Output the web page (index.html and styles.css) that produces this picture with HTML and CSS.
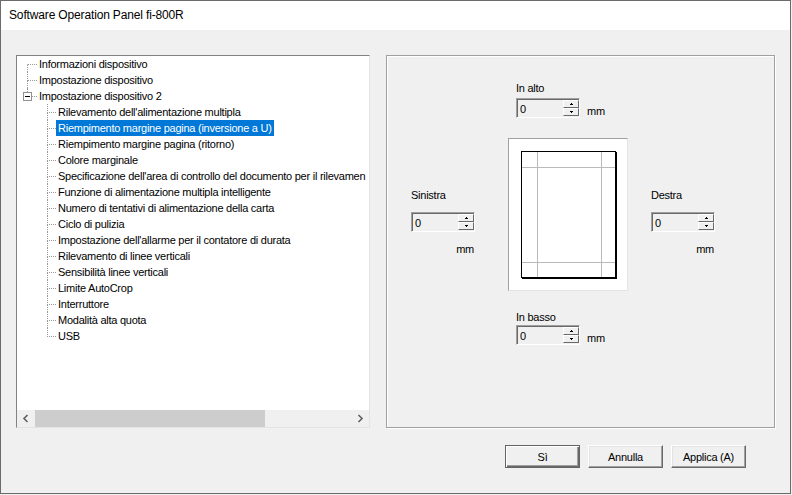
FILE: index.html
```html
<!DOCTYPE html>
<html lang="it">
<head>
<meta charset="utf-8">
<title>Software Operation Panel fi-800R</title>
<link rel="stylesheet" href="styles.css">
</head>
<body>
<div class="window">
  <div class="titlebar">Software Operation Panel fi-800R</div>
  <div class="content">
    <div class="panes">
      <div class="tree">
        <div class="tree-list">
          <div class="row"><div class="twig l0 first"><div class="t"></div><div class="b"></div></div><span class="lbl">Informazioni dispositivo</span></div>
          <div class="row"><div class="twig l0"><div class="t"></div><div class="b"></div></div><span class="lbl">Impostazione dispositivo</span></div>
          <div class="row"><div class="exp"><div class="seg"></div><div class="boxrow"><div class="minus"><div class="bar"></div></div><div class="hline"></div></div></div><span class="lbl">Impostazione dispositivo 2</span></div>
          <div class="row"><div class="twig l1"><div class="t"></div><div class="b"></div></div><span class="lbl">Rilevamento dell'alimentazione multipla</span></div>
          <div class="row"><div class="twig l1"><div class="t"></div><div class="b"></div></div><span class="lbl sel">Riempimento margine pagina (inversione a U)</span></div>
          <div class="row"><div class="twig l1"><div class="t"></div><div class="b"></div></div><span class="lbl">Riempimento margine pagina (ritorno)</span></div>
          <div class="row"><div class="twig l1"><div class="t"></div><div class="b"></div></div><span class="lbl">Colore marginale</span></div>
          <div class="row"><div class="twig l1"><div class="t"></div><div class="b"></div></div><span class="lbl">Specificazione dell'area di controllo del documento per il rilevamen</span></div>
          <div class="row"><div class="twig l1"><div class="t"></div><div class="b"></div></div><span class="lbl">Funzione di alimentazione multipla intelligente</span></div>
          <div class="row"><div class="twig l1"><div class="t"></div><div class="b"></div></div><span class="lbl">Numero di tentativi di alimentazione della carta</span></div>
          <div class="row"><div class="twig l1"><div class="t"></div><div class="b"></div></div><span class="lbl">Ciclo di pulizia</span></div>
          <div class="row"><div class="twig l1"><div class="t"></div><div class="b"></div></div><span class="lbl">Impostazione dell'allarme per il contatore di durata</span></div>
          <div class="row"><div class="twig l1"><div class="t"></div><div class="b"></div></div><span class="lbl">Rilevamento di linee verticali</span></div>
          <div class="row"><div class="twig l1"><div class="t"></div><div class="b"></div></div><span class="lbl">Sensibilità linee verticali</span></div>
          <div class="row"><div class="twig l1"><div class="t"></div><div class="b"></div></div><span class="lbl">Limite AutoCrop</span></div>
          <div class="row"><div class="twig l1"><div class="t"></div><div class="b"></div></div><span class="lbl">Interruttore</span></div>
          <div class="row"><div class="twig l1"><div class="t"></div><div class="b"></div></div><span class="lbl">Modalità alta quota</span></div>
          <div class="row"><div class="twig l1 last"><div class="t"></div><div class="b"></div></div><span class="lbl">USB</span></div>
        </div>
        <div class="hscroll">
          <div class="sb-btn"><svg width="17" height="17" viewBox="0 0 17 17"><path d="M10.5 5 L7 8.5 L10.5 12" fill="none" stroke="#606060" stroke-width="1.6"/></svg></div>
          <div class="sb-track"><div class="sb-thumb"></div></div>
          <div class="sb-btn"><svg width="17" height="17" viewBox="0 0 17 17"><path d="M6.5 5 L10 8.5 L6.5 12" fill="none" stroke="#606060" stroke-width="1.6"/></svg></div>
        </div>
      </div>

      <div class="group">
        <div class="g-top">
          <div class="caption">In alto</div>
          <div class="spinrow top-gap">
            <div class="spin"><div class="field">0</div><div class="spin-btns"><div class="sbtn"><svg width="5" height="3" viewBox="0 0 5 3"><path d="M2 0h1v1h1v1h-3v-1h1z"/></svg></div><div class="sbtn"><svg width="5" height="3" viewBox="0 0 5 3"><path d="M1 0h3v1h-1v1h-1v-1h-1z"/></svg></div></div></div>
            <span class="unit">mm</span>
          </div>
        </div>

        <div class="g-mid">
          <div class="side left">
            <div class="caption">Sinistra</div>
            <div class="spin side-spin"><div class="field">0</div><div class="spin-btns"><div class="sbtn"><svg width="5" height="3" viewBox="0 0 5 3"><path d="M2 0h1v1h1v1h-3v-1h1z"/></svg></div><div class="sbtn"><svg width="5" height="3" viewBox="0 0 5 3"><path d="M1 0h3v1h-1v1h-1v-1h-1z"/></svg></div></div></div>
            <div class="side-unit">mm</div>
          </div>
          <div class="frame">
            <svg class="paper" width="97" height="129" viewBox="0 0 97 129">
              <rect x="0.5" y="0.5" width="94" height="126" fill="#fff" stroke="#000"/>
              <rect x="95" y="1" width="1" height="127" fill="#000"/>
              <rect x="1" y="127" width="95" height="1" fill="#000"/>
              <rect x="16" y="1" width="1" height="125" fill="#b9b9b9"/>
              <rect x="80" y="1" width="1" height="125" fill="#b9b9b9"/>
              <rect x="1" y="16" width="93" height="1" fill="#b9b9b9"/>
              <rect x="1" y="111" width="93" height="1" fill="#b9b9b9"/>
            </svg>
          </div>
          <div class="side right">
            <div class="caption">Destra</div>
            <div class="spin side-spin"><div class="field">0</div><div class="spin-btns"><div class="sbtn"><svg width="5" height="3" viewBox="0 0 5 3"><path d="M2 0h1v1h1v1h-3v-1h1z"/></svg></div><div class="sbtn"><svg width="5" height="3" viewBox="0 0 5 3"><path d="M1 0h3v1h-1v1h-1v-1h-1z"/></svg></div></div></div>
            <div class="side-unit">mm</div>
          </div>
        </div>

        <div class="g-bot">
          <div class="caption">In basso</div>
          <div class="spinrow bot-gap">
            <div class="spin"><div class="field">0</div><div class="spin-btns"><div class="sbtn"><svg width="5" height="3" viewBox="0 0 5 3"><path d="M2 0h1v1h1v1h-3v-1h1z"/></svg></div><div class="sbtn"><svg width="5" height="3" viewBox="0 0 5 3"><path d="M1 0h3v1h-1v1h-1v-1h-1z"/></svg></div></div></div>
            <span class="unit">mm</span>
          </div>
        </div>
      </div>
    </div>

    <div class="buttons">
      <button class="btn default">Sì</button>
      <button class="btn">Annulla</button>
      <button class="btn">Applica (A)</button>
    </div>
  </div>
</div>
</body>
</html>
```

FILE: styles.css
```css
html, body {
  margin: 0;
  padding: 0;
  background: #f0f0f0;
}

body {
  width: 792px;
  height: 495px;
  overflow: hidden;
  font-family: "Liberation Sans", Arial, sans-serif;
  font-size: 11px;
  letter-spacing: -0.25px;
  color: #000;
}

.window {
  box-sizing: border-box;
  width: 791px;
  height: 494px;
  border: 1px solid #6b6b6b;
  background: #f0f0f0;
  display: flex;
  flex-direction: column;
}

.titlebar {
  height: 29px;
  line-height: 29px;
  background: #fff;
  padding-left: 8px;
  font-size: 12px;
  letter-spacing: -0.15px;
  color: #000;
}

.content {
  padding: 25px 15px 0 15px;
}

.panes {
  display: flex;
  gap: 16px;
  height: 373px;
}

/* ---------- tree ---------- */
.tree {
  box-sizing: border-box;
  width: 354px;
  height: 373px;
  border: 1px solid;
  border-color: #828282 #e3e3e3 #e3e3e3 #828282;
  background: #fff;
  display: flex;
  flex-direction: column;
}

.tree-list {
  flex: 1;
  overflow: hidden;
}

.row {
  height: 16px;
  display: flex;
  align-items: stretch;
  white-space: nowrap;
}

.twig {
  flex: none;
  display: flex;
  flex-direction: column;
}

.twig.l0 {
  margin-left: 10px;
  width: 10px;
}

.twig.l1 {
  margin-left: 30px;
  width: 9px;
}

.twig .t {
  box-sizing: border-box;
  height: 9px;
  border-left: 1px dotted #999;
  border-bottom: 1px dotted #999;
}

.twig .b {
  flex: 1;
  border-left: 1px dotted #999;
}

.twig.first .t {
  border-left-color: transparent;
}

.twig.last .b {
  border-left-color: transparent;
}

.exp {
  flex: none;
  margin-left: 6px;
  width: 14px;
  display: flex;
  flex-direction: column;
}

.exp .seg {
  height: 4px;
  margin-left: 4px;
  border-left: 1px dotted #999;
}

.exp .boxrow {
  display: flex;
  align-items: center;
  height: 9px;
}

.minus {
  box-sizing: border-box;
  width: 9px;
  height: 9px;
  border: 1px solid #919191;
  background: #fff;
  display: flex;
  align-items: center;
  justify-content: center;
}

.minus .bar {
  width: 5px;
  height: 1px;
  background: #000;
}

.exp .hline {
  width: 5px;
  border-top: 1px dotted #999;
}

.lbl {
  padding: 0 2px;
  line-height: 16px;
}

.lbl.sel {
  background: #0078d7;
  color: #fff;
}

.hscroll {
  height: 17px;
  display: flex;
  background: #f0f0f0;
}

.sb-btn {
  width: 17px;
  height: 17px;
  flex: none;
}

.sb-btn svg {
  display: block;
}

.sb-track {
  flex: 1;
  display: flex;
}

.sb-thumb {
  width: 230px;
  margin-left: 1px;
  background: #cdcdcd;
}

/* ---------- group ---------- */
.group {
  box-sizing: border-box;
  width: 389px;
  height: 373px;
  border: 1px solid #a0a0a0;
  box-shadow: inset 1px 1px #fff, 1px 1px #fff;
  padding-top: 25px;
}

.caption {
  line-height: 14px;
  height: 14px;
  white-space: nowrap;
}

.g-top,
.g-bot {
  margin-left: 129px;
}

.spinrow {
  display: flex;
  align-items: flex-end;
}

.top-gap {
  margin-top: 3px;
}

.bot-gap {
  margin-top: 1px;
}

.unit {
  margin-left: 7px;
  line-height: 14px;
}

.spin {
  box-sizing: border-box;
  width: 64px;
  height: 20px;
  border: 1px solid;
  border-color: #a0a0a0 #fff #fff #a0a0a0;
  box-shadow: inset 1px 1px #696969;
  background: #f0f0f0;
  display: flex;
  flex: none;
}

.field {
  flex: 1;
  padding-left: 3px;
  padding-top: 1px;
  display: flex;
  align-items: center;
  line-height: 14px;
}

.spin-btns {
  width: 16px;
  margin-top: 1px;
  margin-bottom: 1px;
  display: flex;
  flex-direction: column;
}

.sbtn {
  box-sizing: border-box;
  flex: 1;
  background: #f0f0f0;
  border: 1px solid;
  border-color: #fff #696969 #696969 #fff;
  display: flex;
  align-items: center;
  justify-content: center;
}

.sbtn svg {
  display: block;
}

.g-mid {
  margin-top: 20px;
  display: flex;
  height: 153px;
}

.side {
  display: flex;
  flex-direction: column;
  padding-top: 50px;
}

.side.left {
  margin-left: 24px;
  width: 97px;
}

.side.right {
  margin-left: 23px;
}

.side-spin {
  margin-top: 10px;
}

.side-unit {
  width: 64px;
  box-sizing: border-box;
  padding-right: 1px;
  margin-top: 10px;
  text-align: right;
  line-height: 14px;
}

.frame {
  box-sizing: border-box;
  width: 120px;
  height: 153px;
  border: 1px solid;
  border-color: #a0a0a0 #e3e3e3 #e3e3e3 #a0a0a0;
  background: #fff;
  padding: 12px;
  flex: none;
}

.paper {
  display: block;
}

.g-bot {
  margin-top: 19px;
}

/* ---------- buttons ---------- */
.buttons {
  display: flex;
  justify-content: flex-end;
  gap: 8px;
  margin-top: 17px;
  margin-right: 29px;
}

.btn {
  box-sizing: border-box;
  width: 75px;
  height: 23px;
  padding: 0;
  margin: 0;
  font-family: "Liberation Sans", Arial, sans-serif;
  font-size: 11px;
  letter-spacing: -0.25px;
  color: #000;
  background: #f0f0f0;
  border: 1px solid;
  border-color: #fff #696969 #696969 #fff;
  box-shadow: inset -1px -1px #a0a0a0, inset 1px 1px #e3e3e3;
}

.btn.default {
  border-color: #646464;
  box-shadow: inset 1px 1px #fff, inset -1px -1px #696969, inset -2px -2px #a0a0a0;
}
```
